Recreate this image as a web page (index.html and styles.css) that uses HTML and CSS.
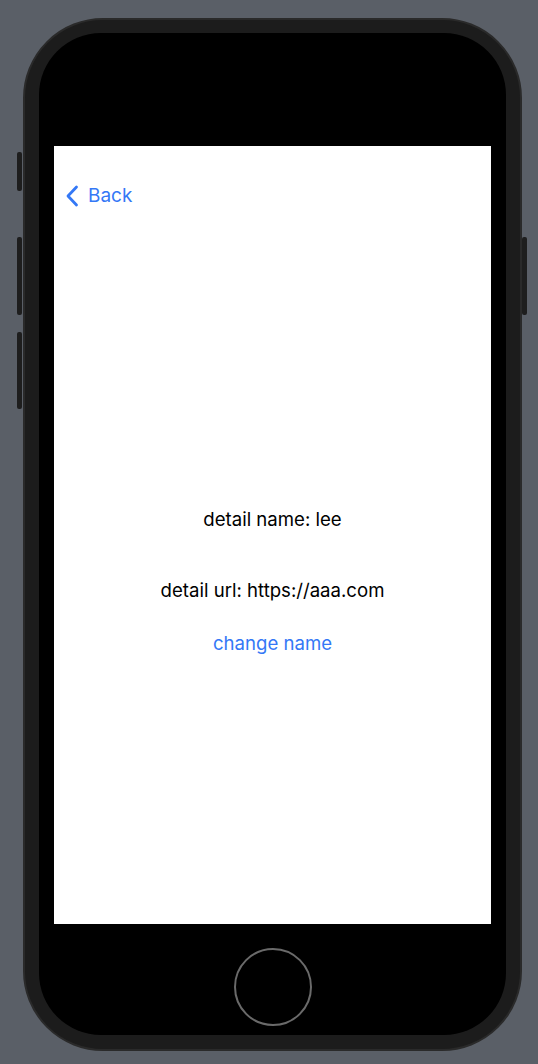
FILE: index.html
```html
<!DOCTYPE html>
<html>
<head>
<meta charset="utf-8">
<link rel="stylesheet" href="styles.css">
</head>
<body>
<div class="phone">
  <span class="btn btn-mute"></span>
  <span class="btn btn-volup"></span>
  <span class="btn btn-voldown"></span>
  <span class="btn btn-power"></span>
  <div class="bezel">
    <div class="screen">
      <div class="nav">
        <svg class="chev" width="14" height="22" viewBox="0 0 14 22"><path d="M11.5 2 L3 11 L11.5 20" fill="none" stroke="#3478f6" stroke-width="2.8" stroke-linecap="round" stroke-linejoin="round"/></svg>
        <span class="back">Back</span>
      </div>
      <div class="content">
        <div class="line">detail name: lee</div>
        <div class="line url">detail url: https://aaa.com</div>
        <div class="link">change name</div>
      </div>
    </div>
    <div class="home"></div>
  </div>
</div>
</body>
</html>
```
FILE: styles.css
```css
html, body {
  margin: 0;
  padding: 0;
  background: #5a5f67;
  width: 538px;
  height: 1064px;
  overflow: hidden;
  font-family: "Inter", "Liberation Sans", sans-serif;
}
.phone {
  position: relative;
  box-sizing: border-box;
  width: 499px;
  height: 1033px;
  margin: 18px 0 0 23px;
  border-radius: 80px;
  background: #1c1c1c;
  border: 2px solid #2a2a2a;
  padding: 13px 14px;
}
.btn {
  position: absolute;
  width: 5px;
  background: #1e1e1e;
  border-radius: 2px;
}
.btn-mute { left: -8px; top: 132px; height: 39px; }
.btn-volup { left: -8px; top: 217px; height: 78px; }
.btn-voldown { left: -8px; top: 312px; height: 77px; }
.btn-power { right: -7px; top: 217px; height: 78px; }
.bezel {
  height: 1002px;
  border-radius: 62px;
  background: #000;
  padding-top: 113px;
  box-sizing: border-box;
  display: flex;
  flex-direction: column;
  align-items: center;
}
.screen {
  width: 437px;
  height: 778px;
  background: #fff;
  display: flex;
  flex-direction: column;
}
.nav {
  display: flex;
  align-items: center;
  height: 22px;
  margin-top: 39px;
  padding-left: 11px;
  gap: 9px;
}
.chev { display: block; }
.back {
  color: #3478f6;
  font-size: 19px;
  line-height: 22px;
}
.content {
  display: flex;
  flex-direction: column;
  align-items: center;
  margin-top: 300px;
}
.line {
  color: #000;
  font-size: 18.6px;
  line-height: 24px;
}
.url { margin-top: 47px; }
.link {
  color: #3478f6;
  font-size: 18.6px;
  line-height: 24px;
  margin-top: 29px;
}
.home {
  margin-top: 24px;
  width: 74px;
  height: 74px;
  border-radius: 50%;
  border: 2.5px solid #6a6a6a;
}
```
